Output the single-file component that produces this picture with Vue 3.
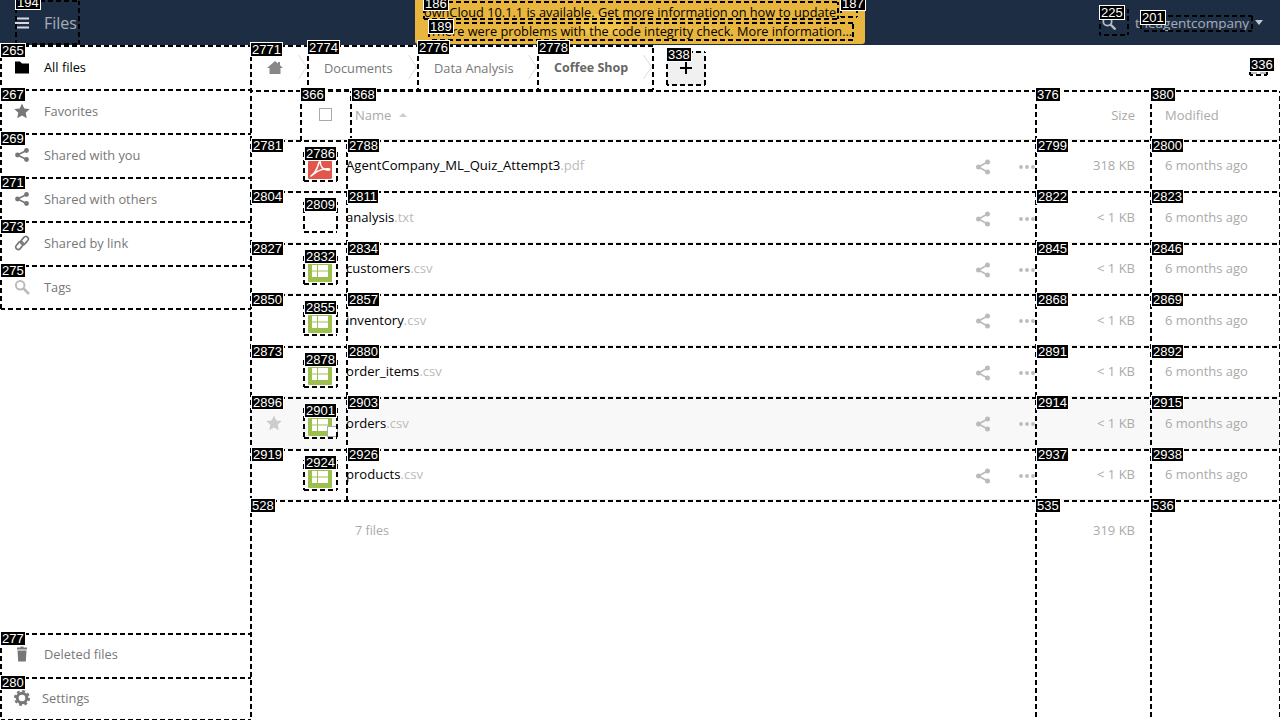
<script setup>
import { computed } from 'vue'

const navTop = [
  { label: 'All files', icon: 'folder', active: true },
  { label: 'Favorites', icon: 'star' },
  { label: 'Shared with you', icon: 'share' },
  { label: 'Shared with others', icon: 'share' },
  { label: 'Shared by link', icon: 'link' },
  { label: 'Tags', icon: 'tag' }
]
const crumbs = [
  { label: 'Documents', w: 110 },
  { label: 'Data Analysis', w: 120 },
  { label: 'Coffee Shop', w: 115, last: true }
]
const files = [
  { name: 'AgentCompany_ML_Quiz_Attempt3', ext: '.pdf', type: 'pdf', size: '318 KB' },
  { name: 'analysis', ext: '.txt', type: 'txt', size: '< 1 KB' },
  { name: 'customers', ext: '.csv', type: 'csv', size: '< 1 KB' },
  { name: 'inventory', ext: '.csv', type: 'csv', size: '< 1 KB' },
  { name: 'order_items', ext: '.csv', type: 'csv', size: '< 1 KB' },
  { name: 'orders', ext: '.csv', type: 'csv', size: '< 1 KB', hover: true },
  { name: 'products', ext: '.csv', type: 'csv', size: '< 1 KB' }
]
const rh = 360 / 7
const rowBoxes = []
const ids = [
  [2781, 2786, 2788, 2799, 2800],
  [2804, 2809, 2811, 2822, 2823],
  [2827, 2832, 2834, 2845, 2846],
  [2850, 2855, 2857, 2868, 2869],
  [2873, 2878, 2880, 2891, 2892],
  [2896, 2901, 2903, 2914, 2915],
  [2919, 2924, 2926, 2937, 2938]
]
ids.forEach((r, i) => {
  const y = Math.round(140 + i * rh)
  const h = Math.round(140 + (i + 1) * rh) - y + 2
  rowBoxes.push([r[0], 250, y, 98, h, 1, -2])
  rowBoxes.push([r[1], 303, y + 10, 35, 32, 1, -4])
  rowBoxes.push([r[2], 346, y, 691, h, 1, -2])
  rowBoxes.push([r[3], 1035, y, 117, h, 1, -2])
  rowBoxes.push([r[4], 1150, y, 131, h, 1, -2])
})
const boxes = [
  [194, 15, 0, 65, 45, 0, -5],
  [265, 0, 45, 252, 46, 0, -2],
  [267, 0, 89, 252, 46, 0, -2],
  [269, 0, 133, 252, 46, 0, -2],
  [271, 0, 177, 252, 46, 0, -2],
  [273, 0, 221, 252, 46, 0, -2],
  [275, 0, 265, 252, 45, 0, -2],
  [277, 0, 633, 252, 46, 0, -2],
  [280, 0, 677, 252, 44, 0, -2],
  [186, 423, 1, 416, 19, 0, -5],
  [187, 840, 1, 18, 17, 0, -5],
  [189, 428, 22, 426, 19, 0, -3],
  [225, 1099, 8, 30, 28, 0, -3],
  [201, 1140, 15, 113, 17, 0, -5],
  [2771, 250, 45, 59, 47, 0, -3],
  [2774, 307, 45, 112, 46, 0, -5],
  [2776, 417, 45, 122, 46, 0, -5],
  [2778, 537, 45, 117, 46, 0, -5],
  [338, 666, 51, 40, 35, 0, -4],
  [336, 1249, 58, 19, 18, 0, -1],
  [366, 300, 90, 52, 52, 0, -3],
  [368, 350, 90, 687, 52, 1, -3],
  [376, 1035, 90, 117, 52, 0, -3],
  [380, 1150, 90, 131, 52, 0, -3],
  ...rowBoxes,
  [528, 250, 500, 787, 222, 0, -2],
  [535, 1035, 500, 117, 222, 0, -2],
  [536, 1150, 500, 131, 222, 0, -2]
]
// every dashed edge is phased to the page, so edges shared by two boxes coincide
const edges = computed(() => {
  const out = []
  boxes.forEach((b) => {
    const l = b[1] + 1
    const t = b[2] + 1
    const r = b[1] + b[3] - 1
    const d = b[2] + b[4] - 1
    out.push({ k: b[0] + 't', d: `M${l} ${t}H${r}`, o: l })
    out.push({ k: b[0] + 'b', d: `M${l} ${d}H${r}`, o: l })
    out.push({ k: b[0] + 'l', d: `M${l} ${t}V${d}`, o: t })
    out.push({ k: b[0] + 'r', d: `M${r} ${t}V${d}`, o: t })
  })
  return out
})
function labelStyle(b) {
  return { left: b[1] + b[5] + 'px', top: b[2] + b[6] + 'px' }
}
</script>

<template>
  <div class="app">
    <header class="topbar">
      <div class="brand">
        <svg class="burger" width="14" height="14" viewBox="0 0 14 14"><path d="M0 1.500h14v2H0zM0 6h14v2H0zM0 10.500h14v2H0z" fill="#d6dae0"/></svg>
        <span class="app-name">Files</span>
      </div>
      <div class="banner">
        <svg class="banner-logo" width="48" height="20" viewBox="0 0 48 20"><path d="M8 20a7 7 0 0 1-1-14 13 13 0 0 1 24-2 9 9 0 0 1 8 16z" fill="#f4c74c" opacity=".7"/></svg>
        <span class="banner-word">ownCloud</span>
        <div class="banner-line first">ownCloud 10.1.1 is available. Get more information on how to update.</div>
        <div class="banner-line second">There were problems with the code integrity check. More information…</div>
      </div>
      <div class="right">
        <svg class="head-search" width="15" height="14" viewBox="0 0 15 14"><circle cx="5.500" cy="5.500" r="4.200" fill="none" stroke="#b6bdc7" stroke-width="1.800"/><path d="M8.500 8.500l5 5" stroke="#b6bdc7" stroke-width="2.400"/></svg>
        <span class="user">theagentcompany</span>
        <span class="caret"></span>
      </div>
    </header>
    <div class="body">
      <nav class="nav">
        <ul class="nav-list">
          <li v-for="n in navTop" :key="n.label" class="nav-item" :class="{ active: n.active }">
            <svg class="nav-icon" width="16" height="16" viewBox="0 0 16 16">
              <path v-if="n.icon === 'folder'" d="M1 2.500h5l2 2h7v10H1z" fill="#000"/>
              <path v-else-if="n.icon === 'star'" d="M8 .5l2.300 5 5.400.6-4 3.700 1.100 5.400L8 12.500l-4.800 2.700 1.100-5.400-4-3.700 5.400-.6z" fill="#777"/>
              <g v-else-if="n.icon === 'share'" fill="#777"><circle cx="12.500" cy="3.500" r="2.400"/><circle cx="12.500" cy="12.500" r="2.400"/><circle cx="3.500" cy="8" r="2.400"/><path d="M3.500 8l9-4.500M3.500 8l9 4.500" stroke="#777" stroke-width="1.500"/></g>
              <g v-else-if="n.icon === 'link'" fill="none" stroke="#777" stroke-width="1.700"><rect x="8" y="1" width="5" height="9" rx="2.500" transform="rotate(40 10.500 5.500)"/><rect x="3" y="6" width="5" height="9" rx="2.500" transform="rotate(40 5.500 10.500)"/></g>
              <g v-else fill="none" stroke="#bbb"><circle cx="6.200" cy="6.200" r="4.300" stroke-width="2"/><path d="M9.500 9.500l5.500 5.500" stroke-width="2.500"/></g>
            </svg>
            <span>{{ n.label }}</span>
          </li>
        </ul>
        <div class="nav-bottom">
          <div class="nav-item">
            <svg class="nav-icon" width="16" height="16" viewBox="0 0 16 16"><path d="M3 1.500h3.500V.5h3v1H13v2H3zM3.500 4.500h9l-.7 11H4.200z" fill="#777"/></svg>
            <span>Deleted files</span>
          </div>
          <div class="nav-item settings">
            <svg class="nav-icon gear" width="16" height="16" viewBox="0 0 16 16"><circle cx="8" cy="8" r="4.800" fill="none" stroke="#777" stroke-width="3"/><circle cx="8" cy="8" r="7" fill="none" stroke="#777" stroke-width="2" stroke-dasharray="2.900 2.600"/></svg>
            <span>Settings</span>
          </div>
        </div>
      </nav>
      <main class="main">
        <div class="crumbs">
          <div class="crumb home">
            <svg width="16" height="16" viewBox="0 0 16 16"><path d="M8 1l3 2.500V2h2v3.200L16 8h-2.500v6h-11V8H0z" fill="#888"/></svg>
            <svg class="chev" width="9" height="24" viewBox="0 0 9 24"><path d="M.5 0l8 12-8 12" fill="none" stroke="#ddd"/></svg>
          </div>
          <div v-for="c in crumbs" :key="c.label" class="crumb" :class="{ last: c.last }" :style="{ width: c.w + 'px' }">
            <span>{{ c.label }}</span>
            <svg class="chev" width="9" height="24" viewBox="0 0 9 24"><path d="M.5 0l8 12-8 12" fill="none" stroke="#ddd"/></svg>
          </div>
          <button class="add">
            <svg width="12" height="12" viewBox="0 0 12 12"><path d="M5 0h2v5h5v2H7v5H5V7H0V5h5z" fill="#000"/></svg>
          </button>
          <div class="view-toggle"><i></i><i></i></div>
        </div>
        <div class="table">
          <div class="row head">
            <div></div>
            <div class="check-cell"><span class="checkbox"></span></div>
            <div class="name-head">Name <span class="sort"></span></div>
            <div class="size">Size</div>
            <div class="mod">Modified</div>
          </div>
          <div v-for="f in files" :key="f.name" class="row file" :class="{ hover: f.hover }">
            <div class="star-cell">
              <svg v-if="f.hover" width="16" height="16" viewBox="0 0 16 16"><path d="M8 .5l2.300 5 5.400.6-4 3.700 1.100 5.400L8 12.500l-4.800 2.700 1.100-5.400-4-3.700 5.400-.6z" fill="#ccc"/></svg>
            </div>
            <div class="thumb">
              <svg v-if="f.type === 'pdf'" width="24" height="19" viewBox="0 0 24 19"><rect width="24" height="19" rx="1.500" fill="#e2574c"/><path d="M2.500 16.500C6 14 9.500 8 10.800 3c.4-2 2-1.600 1.600 0-.5 2.500 3 7.500 8 7.300 1.800 0 1.800-1.500.3-1.500C16 8.500 9.500 10.300 6 14" fill="none" stroke="#fff" stroke-width="1.500"/></svg>
              <svg v-else-if="f.type === 'csv'" width="24" height="19" viewBox="0 0 24 19"><rect width="24" height="19" rx="1" fill="#9dbf4e"/><path d="M4 2h5v5.500H4zM10 2h10v5.500H10zM4 8.500h5V14H4zM10 8.500h10V14H10z" fill="#fff"/></svg>
              <span v-if="f.hover" class="thumb-check"></span>
            </div>
            <div class="name-cell">
              <span class="fname">{{ f.name }}<span class="ext">{{ f.ext }}</span></span>
              <svg class="act-share" width="16" height="16" viewBox="0 0 16 16"><g fill="#bbb"><circle cx="12.500" cy="3" r="2.500"/><circle cx="12.500" cy="13" r="2.500"/><circle cx="3.500" cy="8" r="2.500"/><path d="M3.500 8l9-5M3.500 8l9 5" stroke="#bbb" stroke-width="1.600"/></g></svg>
              <svg class="act-more" width="16" height="4" viewBox="0 0 16 4"><circle cx="2" cy="2" r="1.900" fill="#bbb"/><circle cx="8" cy="2" r="1.900" fill="#bbb"/><circle cx="14" cy="2" r="1.900" fill="#bbb"/></svg>
            </div>
            <div class="size">{{ f.size }}</div>
            <div class="mod">6 months ago</div>
          </div>
          <div class="row foot">
            <div></div>
            <div></div>
            <div class="files-count">7 files</div>
            <div class="size">319 KB</div>
            <div></div>
          </div>
        </div>
      </main>
    </div>
    <div class="overlay">
      <svg class="edges" width="1280" height="720" viewBox="0 0 1280 720">
        <path v-for="e in edges" :key="e.k" :d="e.d" :stroke-dashoffset="e.o" stroke="#000" stroke-width="2" stroke-dasharray="5 3" fill="none"/>
      </svg>
      <span v-for="b in boxes" :key="'l' + b[0]" class="tag" :style="labelStyle(b)">{{ b[0] }}</span>
    </div>
  </div>
</template>

<style>
html, body { margin: 0; height: 100%; overflow: hidden; background: #fff; }
</style>

<style scoped>
.app { position: relative; width: 1280px; height: 720px; overflow: hidden; font-family: "Open Sans", sans-serif; font-size: 13px; color: #555; }
.topbar { height: 45px; background: #1d2d44; display: flex; align-items: flex-start; justify-content: space-between; }
.brand { display: flex; align-items: center; height: 45px; padding-left: 15px; width: 415px; box-sizing: border-box; }
.burger { margin-right: 15px; }
.app-name { color: #fff; opacity: .6; font-size: 16px; }
.banner { position: relative; width: 450px; height: 44px; background: #e8b53f; border-radius: 0 0 3px 3px; color: #000; font-size: 12.750px; box-sizing: border-box; padding-top: 3px; }
.banner-line { height: 19px; line-height: 19px; position: relative; white-space: nowrap; }
.banner-line.first { padding-left: 9px; }
.banner-line.second { padding-left: 15px; }
.banner-logo { position: absolute; left: 165px; top: 14px; }
.banner-word { position: absolute; left: 228px; top: 13px; font-size: 16px; color: #edbf50; }
.right { display: flex; align-items: center; height: 45px; width: 415px; justify-content: flex-end; box-sizing: border-box; padding-right: 17px; }
.head-search { margin-right: 18px; }
.user { color: #fff; opacity: .6; font-size: 13.500px; }
.caret { width: 0; height: 0; border: 4px solid transparent; border-top: 5px solid #c3c8cf; border-bottom: 0; margin-left: 6px; }
.body { display: flex; height: 675px; }
.nav { width: 250px; flex: none; border-right: 1px solid #eee; display: flex; flex-direction: column; justify-content: space-between; margin-right: -1px; font-size: 12.800px; }
.nav-list { list-style: none; margin: 0; padding: 0; }
.nav-item { display: flex; align-items: center; height: 44px; padding-left: 14px; color: #777; }
.nav-item.active { color: #000; }
.nav-icon { margin-right: 14px; }
.settings .nav-icon { margin-right: 12px; }
.main { width: 1030px; flex: none; }
.crumbs { height: 45px; display: flex; align-items: stretch; font-size: 12.800px; }
.crumb { position: relative; box-sizing: border-box; padding-left: 17px; display: flex; align-items: center; color: #777; }
.crumb.home { width: 57px; }
.crumb.last { font-weight: 700; font-size: 12.500px; color: #666; }
.chev { position: absolute; right: 0; top: 10px; }
.add { width: 38px; height: 34px; margin: 6px 0 0 15px; border: 0; padding: 0; background: #f0f0f0; border-radius: 3px; display: flex; align-items: center; justify-content: center; }
.view-toggle { margin-left: auto; margin-right: 13px; margin-top: 26px; width: 17px; display: flex; justify-content: space-between; }
.view-toggle i { width: 7px; height: 3px; background: #bbb; display: block; }
.row { display: grid; grid-template-columns: 47px 49px 689px 115px 130px; border-bottom: 1px solid #eee; box-sizing: border-box; }
.head { height: 50.200px; grid-template-columns: 50px 50px 685px 115px 130px; align-items: center; color: #aaa; }
.check-cell { display: flex; justify-content: center; }
.checkbox { width: 11px; height: 11px; border: 1px solid #aaa; display: block; }
.name-head { padding-left: 5px; display: flex; align-items: center; }
.sort { width: 0; height: 0; border: 4px solid transparent; border-bottom: 4px solid #ccc; border-top: 0; margin-left: 8px; }
.size { text-align: right; padding-right: 15px; color: #aaa; }
.mod { padding-left: 15px; color: #aaa; }
.file { height: 51.430px; align-items: center; }
.file.hover { background: #f8f8f8; }
.star-cell { display: flex; justify-content: center; }
.thumb { position: relative; padding-left: 11px; align-self: start; margin-top: 20px; height: 19px; }
.thumb svg { display: block; }
.thumb-check { position: absolute; left: 30px; top: 9px; width: 9px; height: 9px; background: #fff; border: 1px solid #aaa; }
.name-cell { position: relative; display: flex; align-items: center; height: 100%; }
.fname { color: #000; font-size: 13.100px; }
.ext { color: #bbb; }
.act-share { position: absolute; left: 629px; top: 19px; }
.act-more { position: absolute; left: 673px; top: 25px; }
.foot { border: 0; height: 60px; align-items: center; color: #aaa; }
.files-count { padding-left: 9px; font-size: 12.500px; }
.overlay { position: absolute; inset: 0; pointer-events: none; }
.edges { position: absolute; left: 0; top: 0; display: block; }
.tag { position: absolute; background: #000; color: #fff; border: 1px solid #fff; padding: 0 1px; font: 13px/13px "Liberation Sans", sans-serif; white-space: nowrap; }
</style>
